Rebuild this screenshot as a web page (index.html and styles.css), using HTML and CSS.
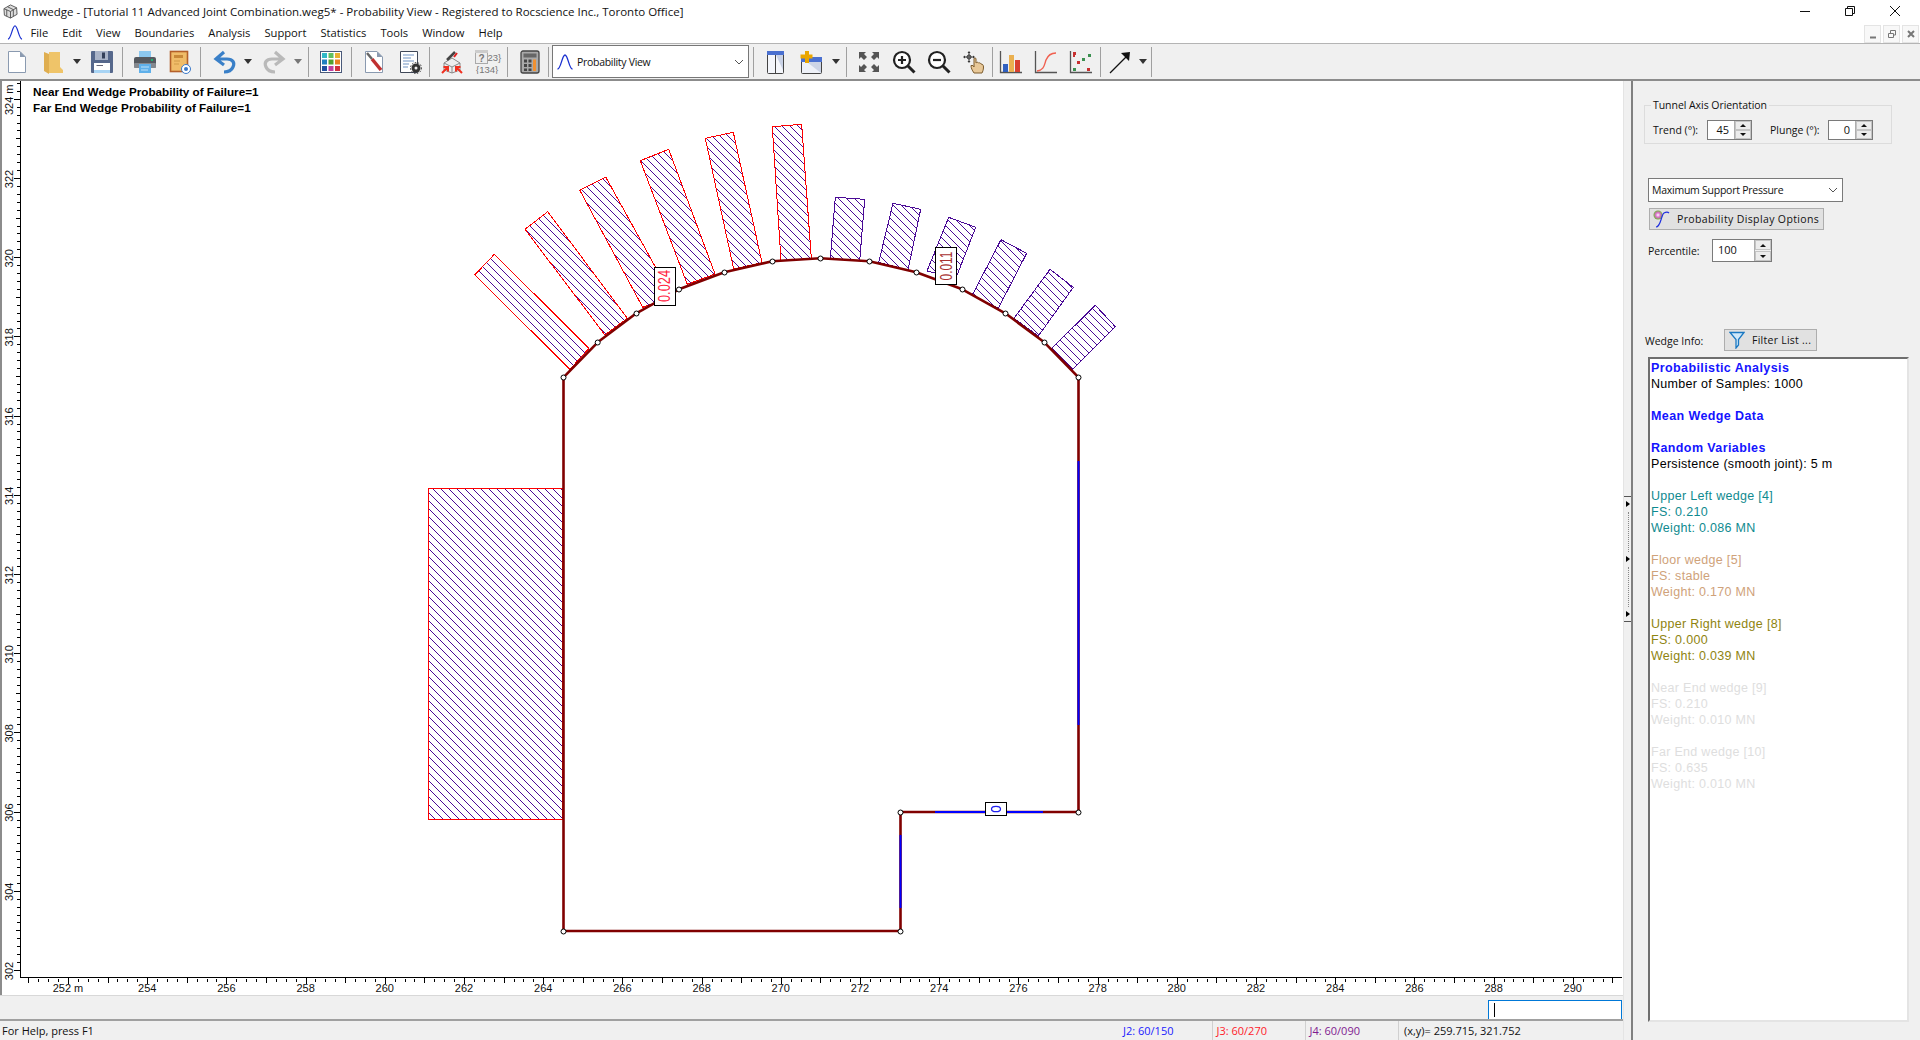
FILE: index.html
```html
<!DOCTYPE html>
<html lang="en">
<head>
<meta charset="utf-8">
<title>Unwedge</title>
<link rel="stylesheet" href="styles.css">
</head>
<body>
<div class="app">
  <header class="titlebar">
    <svg class="appicon" viewBox="0 0 16 16"><path d="M8 1 14.500 4 15 11 8 15 1.500 12 1 5Z" fill="#ddd" stroke="#555"/><path d="M1 5 8 8 14.500 4M8 8V15M5 3 11 6M4 6V13M11 6V13" fill="none" stroke="#555"/></svg>
    <span class="title-text">Unwedge - [Tutorial 11 Advanced Joint Combination.weg5* - Probability View - Registered to Rocscience Inc., Toronto Office]</span>
    <div class="winbtns">
      <svg class="wb" viewBox="0 0 10 10"><path d="M0 5.500H10" stroke="#111" fill="none"/></svg>
      <svg class="wb" viewBox="0 0 10 10"><path d="M.5 2.500H7.500V9.500H.5ZM2.500 2.500V.5H9.500V7.500H7.500" stroke="#111" fill="none"/></svg>
      <svg class="wb" viewBox="0 0 10 10"><path d="M0 0 10 10M10 0 0 10" stroke="#111" fill="none"/></svg>
    </div>
  </header>

  <nav class="menubar">
    <svg class="menuicon" viewBox="0 0 16 16"><path d="M.5 15C4 15 5 1 8 1S12 15 15.500 15" fill="none" stroke="#1a30d0" stroke-width="1.300"/></svg>
    <span>File</span><span>Edit</span><span>View</span><span>Boundaries</span><span>Analysis</span><span>Support</span><span>Statistics</span><span>Tools</span><span>Window</span><span>Help</span>
    <div class="mdibtns">
      <div class="mdi"><svg viewBox="0 0 10 10"><path d="M2 8.500H8" stroke="#777" stroke-width="2"/></svg></div>
      <div class="mdi"><svg viewBox="0 0 10 10"><path d="M1.500 4.500H6.500V8.500H1.500ZM3.500 4V1.500H8.500V6H7" stroke="#777" fill="none"/></svg></div>
      <div class="mdi"><svg viewBox="0 0 10 10"><path d="M2 2 8 8M8 2 2 8" stroke="#777" stroke-width="2"/></svg></div>
    </div>
  </nav>

  <div class="toolbar">
    <svg class="ic g5" viewBox="0 0 24 24"><path d="M3.500 1.500H15L20.500 7V22.500H3.500Z" fill="#fff" stroke="#8a9ab0"/><path d="M15 1.500V7H20.500Z" fill="#8a9ab0"/></svg>
    <svg class="ic g12" viewBox="0 0 24 24"><path d="M8 2H19V17L22 20V23H8Z" fill="#efc469"/><path d="M3 2 8 4V24L3 21Z" fill="#dfae50"/></svg>
    <svg class="dd g8" viewBox="0 0 8 5"><path d="M0 0H8L4 5Z" fill="#333"/></svg>
    <svg class="ic g9" viewBox="0 0 24 24"><rect x="1" y="1" width="22" height="22" rx="1" fill="#56688c"/><rect x="5" y="1" width="13" height="9" fill="#aab4c8"/><rect x="12" y="2.500" width="3" height="6" fill="#34405a"/><rect x="4" y="13" width="16" height="10" fill="#fff"/><rect x="4" y="20" width="16" height="3" fill="#a8d4f4"/><path d="M6.500 15.500H13" stroke="#667" fill="none"/></svg>
    <i class="sep g8"></i>
    <svg class="ic g10" viewBox="0 0 24 24"><rect x="6" y="1" width="12" height="7" fill="#8cc8f0"/><rect x="1" y="7" width="22" height="11" rx="2" fill="#55595f"/><rect x="1" y="13" width="22" height="5" rx="1" fill="#85898f"/><rect x="6" y="14" width="12" height="9" fill="#5fb0ea"/><path d="M8 17H16M8 20H15" stroke="#bfe0f8"/><rect x="18" y="9" width="2" height="2" fill="#20b070"/></svg>
    <svg class="ic g10" viewBox="0 0 24 24"><rect x="3.500" y="1.500" width="17" height="20" fill="#f0bc68" stroke="#b4602a" stroke-width="1.600"/><rect x="7" y="5" width="9" height="3" fill="#c88838"/><path d="M7 11H13M7 14H12" stroke="#d09a48"/><circle cx="19" cy="19" r="4.500" fill="#fff" stroke="#3a78c8"/><circle cx="19" cy="19" r="2" fill="#3a78c8"/></svg>
    <i class="sep g9"></i>
    <svg class="ic g12" viewBox="0 0 24 24"><path d="M11 2 3 9 11 15M4 9H14C20 9 22 13 20 17 18.500 20.500 15 22 11 22" fill="none" stroke="#3a80c8" stroke-width="3.200"/></svg>
    <svg class="dd g7" viewBox="0 0 8 5"><path d="M0 0H8L4 5Z" fill="#333"/></svg>
    <svg class="ic g10" viewBox="0 0 24 24"><path d="M13 2 21 9 13 15M20 9H10C4 9 2 13 4 17 5.500 20.500 9 22 13 22" fill="none" stroke="#b9b9b9" stroke-width="3.200"/></svg>
    <svg class="dd g8" viewBox="0 0 8 5"><path d="M0 0H8L4 5Z" fill="#777"/></svg>
    <i class="sep g6"></i>
    <svg class="ic g10" viewBox="0 0 24 24"><rect x="1.500" y="1.500" width="21" height="21" fill="#fff" stroke="#4a5a7a"/><path fill="#30b8c8" d="M3 3H8V8H3Z"/><path fill="#60c060" d="M9.500 3H14.500V8H9.500Z"/><path fill="#e8b030" d="M16 3H21V8H16Z"/><path fill="#2080c0" d="M3 9.500H8V14.500H3Z"/><path fill="#50a030" d="M9.500 9.500H14.500V14.500H9.500Z"/><path fill="#e88020" d="M16 9.500H21V14.500H16Z"/><path fill="#2050a0" d="M3 16H8V21H3Z"/><path fill="#c040a0" d="M9.500 16H14.500V21H9.500Z"/><path fill="#d03040" d="M16 16H21V21H16Z"/></svg>
    <i class="sep g8"></i>
    <svg class="ic g10" viewBox="0 0 24 24"><path d="M3.500 1.500H15L20.500 7V22.500H3.500Z" fill="#fff" stroke="#8a9ab0"/><path d="M15 1.500V7H20.500Z" fill="#8a9ab0"/><path d="M10 9 19 20" stroke="#c03030" stroke-width="3.500"/><path d="M5 3 10 9" stroke="#666" stroke-width="2.500"/></svg>
    <svg class="ic g12" viewBox="0 0 24 24"><path d="M2.500 1.500H19.500V22.500H2.500Z" fill="#fff" stroke="#404858"/><path d="M5 5H16M5 8H13M5 11H16M5 14H11M5 17H10" stroke="#a0b8d8" stroke-width="1.500"/><circle cx="18" cy="18" r="4.500" fill="#333"/><circle cx="18" cy="18" r="5.500" fill="none" stroke="#333" stroke-dasharray="1.500 1.500"/><circle cx="18" cy="18" r="1.500" fill="#eee"/></svg>
    <i class="sep g7"></i>
    <svg class="ic g10" viewBox="0 0 24 24"><path d="M12 8 20 13V20L12 23 4 20V13Z" fill="#eee" stroke="#888"/><path d="M4 13 12 17 20 13M12 17V23" fill="none" stroke="#888"/><path d="M7 10 15 2" stroke="#444" stroke-width="2.500"/><path d="M14 7 17 3" stroke="#e02020" stroke-width="2"/><path d="M2 23 8 17M3.500 17H8V21.500M22 23 16 17M20.500 17H16V21.500" fill="none" stroke="#f03020" stroke-width="2"/></svg>
    <svg class="ic-q g10" viewBox="0 0 28 24"><rect x="1.500" y="0.500" width="12" height="13" fill="#eee" stroke="#aaa"/><rect x="1" y="0" width="13" height="3" fill="#ccc"/><text class="t-q" x="7.500" y="12" text-anchor="middle">?</text><text class="t-q2" x="13.500" y="11">23}</text><text class="t-q2" x="2" y="22.500">{134}</text></svg>
    <i class="sep g5"></i>
    <svg class="ic g10" viewBox="0 0 24 24"><rect x="3" y="1" width="18" height="22" rx="2" fill="#a9a9a9" stroke="#444" stroke-width="1.300"/><rect x="5.500" y="3.500" width="13" height="4" fill="#666"/><path d="M6 9.500H9V12.500H6ZM10.500 9.500H13.500V12.500H10.500ZM6 14H9V17H6ZM10.500 14H13.500V17H10.500ZM6 18.500H9V21H6ZM10.500 18.500H13.500V21H10.500Z" fill="#444"/><path d="M15 9.500H18V21H15Z" fill="#f09030"/></svg>
    <i class="sep g6"></i>
    <div class="combo g3">
      <svg class="bell" viewBox="0 0 16 16"><path d="M.5 15C4 15 5 1 8 1S12 15 15.500 15" fill="none" stroke="#1a30d0" stroke-width="1.300"/></svg>
      <span class="combo-text">Probability View</span>
      <svg class="chev" viewBox="0 0 10 6"><path d="M1 1 5 5 9 1" fill="none" stroke="#555"/></svg>
    </div>
    <i class="sep g4"></i>
    <svg class="ic g10" viewBox="0 0 24 24"><rect x="3.500" y="1.500" width="16" height="22" rx="1" fill="#f4f6fb" stroke="#444"/><path d="M12 5 19 5V20Z" fill="#c9d2e6"/><rect x="3" y="1" width="17" height="4" fill="#4a70d0"/><path d="M11.500 5V23.500" stroke="#444"/></svg>
    <svg class="ic g11" viewBox="0 0 24 24"><rect x="2.500" y="7.500" width="20" height="16" rx="1" fill="#eef1f8" stroke="#444"/><path d="M8 12H22V23Z" fill="#ccd4e6"/><rect x="2" y="7" width="21" height="5" fill="#4a70d0"/><path d="M6 1H10V4.500H13.500V8.500H10V13H6V8.500H1.500V4.500H6Z" fill="#eaa600"/></svg>
    <svg class="dd g9" viewBox="0 0 8 5"><path d="M0 0H8L4 5Z" fill="#333"/></svg>
    <i class="sep g6"></i>
    <svg class="ic g10" viewBox="0 0 24 24"><path fill="#555" d="M2 2H9L7 4 10 7 7 10 4 7 2 9ZM22 2H15L17 4 14 7 17 10 20 7 22 9ZM2 22H9L7 20 10 17 7 14 4 17 2 15ZM22 22H15L17 20 14 17 17 14 20 17 22 15Z"/></svg>
    <svg class="ic g11" viewBox="0 0 24 24"><circle cx="10" cy="10" r="8" fill="#fff" stroke="#222" stroke-width="2.200"/><path d="M16 16 22.500 22.500" stroke="#222" stroke-width="3"/><path d="M6 10H14M10 6V14" stroke="#222" stroke-width="2.200"/></svg>
    <svg class="ic g11" viewBox="0 0 24 24"><circle cx="10" cy="10" r="8" fill="#fff" stroke="#222" stroke-width="2.200"/><path d="M16 16 22.500 22.500" stroke="#222" stroke-width="3"/><path d="M6 10H14" stroke="#222" stroke-width="2.200"/></svg>
    <svg class="ic g11" viewBox="0 0 24 24"><path d="M2 7H12M7 2V12" stroke="#333"/><path d="M5.500 3 7 1 8.500 3ZM5.500 11 7 13 8.500 11ZM3 5.500 1 7 3 8.500ZM11 5.500 13 7 11 8.500Z" fill="#333"/><circle cx="7" cy="7" r="2" fill="none" stroke="#333"/><path d="M12 23C10 20 9 18 9 15.500L11 15.500 12 17V9C12 7.500 14 7.500 14 9V13C15 12 16 12 16.500 13 17.500 12.500 18.500 13 19 14 20.500 14 21.500 15 21.500 17 21.500 20 20.500 22 20 23Z" fill="#e8c898" stroke="#7d5c2e"/></svg>
    <i class="sep g6"></i>
    <svg class="ic g6" viewBox="0 0 24 24"><path d="M1.500 1V22.500H23" fill="none" stroke="#555" stroke-width="1.300"/><rect x="4" y="14" width="5" height="8" fill="#3060c0"/><rect x="10" y="5" width="5" height="17" fill="#eab050"/><rect x="16" y="10" width="5" height="12" fill="#d84030"/></svg>
    <svg class="ic g11" viewBox="0 0 24 24"><path d="M1.500 1V22.500H23" fill="none" stroke="#555" stroke-width="1.300"/><path d="M3 21C10 20 10 16 12 10 14 5 18 3 22 3" fill="none" stroke="#f06050" stroke-width="1.400"/></svg>
    <svg class="ic g11" viewBox="0 0 24 24"><path d="M1.500 1V22.500H23" fill="none" stroke="#555" stroke-width="1.300"/><path fill="#c83030" d="M4 2H7V5H4ZM8 11H11V14H8ZM18 18H21V21H18ZM4 5H6V7H4Z"/><path fill="#3a9050" d="M19 4H22V7H19ZM13 8H16V11H13ZM4 18H7V21H4Z"/></svg>
    <i class="sep g7"></i>
    <svg class="ic g7" viewBox="0 0 24 24"><path d="M2 23 20 5" stroke="#111" stroke-width="1.300"/><path d="M13 3 22 2 21 11Z" fill="#111"/></svg>
    <svg class="dd g7" viewBox="0 0 8 5"><path d="M0 0H8L4 5Z" fill="#333"/></svg>
    <i class="sep g4"></i>
  </div>

  <main class="main">
    <section class="workspace">
      <div class="canvas">
        <svg class="plot" viewBox="0 81 1623 914" width="1623" height="914">
          <defs>
            <pattern id="hatch" patternUnits="userSpaceOnUse" width="8" height="8">
              <path class="hatch-line" d="M-1 -1 9 9"/>
            </pattern>
          </defs>

          <g class="note">
            <text x="33" y="96">Near End Wedge Probability of Failure=1</text>
            <text x="33" y="112">Far End Wedge Probability of Failure=1</text>
          </g>

          <g class="wedge red">
            <polygon points="474.700,275 494.300,254.300 589,348.300 570,369.300"/>
            <polygon points="525,229.300 547.700,211.700 627.300,318.300 605,335"/>
            <polygon points="579.700,190 605.700,177 672,297 642.700,307.300"/>
            <polygon points="640.300,160.700 668.700,149.300 715,274 687.300,284.300"/>
            <polygon points="705.300,138.300 733.300,132.300 762,262.700 733.700,269"/>
            <polygon points="772.300,126.700 801.700,124.300 811.300,258.300 781,260.700"/>
            <rect class="wedge-box" x="428.500" y="488.500" width="134" height="331"/>
          </g>
          <g class="wedge purple">
            <polygon points="835.300,197.300 864.700,199.300 859.700,260.700 830.300,258.700"/>
            <polygon points="893,203.300 920.700,209.300 908,270 878.700,262.300"/>
            <polygon points="948.700,217.300 975.700,227.300 956,278 927,271"/>
            <polygon points="1001,239.700 1026.700,253.300 998.300,308.300 972.300,295"/>
            <polygon points="1050,269.300 1073.300,287.300 1038.300,336 1014,318.300"/>
            <polygon points="1095.300,305.300 1115.300,326.700 1072.700,369.300 1051.700,348.300"/>
          </g>

          <polyline class="tunnel" points="563.500,377.300 597.700,342.300 636.300,313.300 679,289.300 724.300,272.300 772.300,261.300 820.300,258.300 869.300,261.300 916.300,272.300 962.300,289.300 1005.300,313.300 1044.300,342.300 1078.500,377.300 1078.500,812 900.500,812 900.500,931 563.500,931 563.500,377.300"/>
          <path class="tunnel-blue" d="M1078.500 461V725M1043 812H935M900.500 835V908"/>

          <g class="vertex">
            <circle cx="563.500" cy="377.500" r="2.500"/><circle cx="597.700" cy="342.500" r="2.500"/><circle cx="636.500" cy="313.500" r="2.500"/><circle cx="679" cy="289.500" r="2.500"/><circle cx="724.500" cy="272.500" r="2.500"/><circle cx="772.500" cy="261.500" r="2.500"/><circle cx="820.500" cy="258.500" r="2.500"/><circle cx="869.500" cy="261.500" r="2.500"/><circle cx="916.500" cy="272.500" r="2.500"/><circle cx="962.500" cy="289.500" r="2.500"/><circle cx="1005.500" cy="313.500" r="2.500"/><circle cx="1044.500" cy="342.500" r="2.500"/><circle cx="1078.500" cy="377.500" r="2.500"/><circle cx="1078.500" cy="812.500" r="2.500"/><circle cx="900.500" cy="812.500" r="2.500"/><circle cx="900.500" cy="931.500" r="2.500"/><circle cx="563.500" cy="931.500" r="2.500"/>
          </g>

          <g class="flag">
            <rect x="654.500" y="267.500" width="21" height="38"/>
            <text class="flag-red" transform="rotate(-90 670 286)" x="670" y="286" textLength="32" lengthAdjust="spacingAndGlyphs">0.024</text>
            <rect x="935.500" y="247.500" width="21" height="37"/>
            <text class="flag-dark" transform="rotate(-90 951.500 266)" x="951.500" y="266" textLength="29" lengthAdjust="spacingAndGlyphs">0.011</text>
            <rect x="985.500" y="802.500" width="21" height="13"/>
            <ellipse class="flag-ring" cx="996" cy="809" rx="4.500" ry="2.700"/>
          </g>

          <path class="axis" d="M20.500 81V977.500H1622"/>
          <g class="ticks">
            <line class="t1" x1="28.400" y1="980" x2="1620" y2="980"/>
            <line class="t2" x1="28.400" y1="980.500" x2="1620" y2="980.500"/>
            <line class="t3" x1="68" y1="981" x2="1620" y2="981"/>
            <line class="t1y" x1="18.500" y1="971" x2="18.500" y2="82"/>
            <line class="t3" x1="17" y1="971" x2="17" y2="82"/>
            <line class="t2" x1="18" y1="931.400" x2="18" y2="82"/>
          </g>
          <g class="xlabels">
            <text x="68" y="992">252 m</text><text x="147.200" y="992">254</text><text x="226.400" y="992">256</text><text x="305.600" y="992">258</text><text x="384.800" y="992">260</text><text x="464" y="992">262</text><text x="543.200" y="992">264</text><text x="622.400" y="992">266</text><text x="701.600" y="992">268</text><text x="780.800" y="992">270</text><text x="860" y="992">272</text><text x="939.200" y="992">274</text><text x="1018.400" y="992">276</text><text x="1097.600" y="992">278</text><text x="1176.800" y="992">280</text><text x="1256" y="992">282</text><text x="1335.200" y="992">284</text><text x="1414.400" y="992">286</text><text x="1493.600" y="992">288</text><text x="1572.800" y="992">290</text>
          </g>
          <g class="xlabels">
            <text transform="rotate(-90 13 971)" x="13" y="971">302</text>
            <text transform="rotate(-90 13 891.800)" x="13" y="891.800">304</text>
            <text transform="rotate(-90 13 812.600)" x="13" y="812.600">306</text>
            <text transform="rotate(-90 13 733.400)" x="13" y="733.400">308</text>
            <text transform="rotate(-90 13 654.200)" x="13" y="654.200">310</text>
            <text transform="rotate(-90 13 575)" x="13" y="575">312</text>
            <text transform="rotate(-90 13 495.800)" x="13" y="495.800">314</text>
            <text transform="rotate(-90 13 416.600)" x="13" y="416.600">316</text>
            <text transform="rotate(-90 13 337.400)" x="13" y="337.400">318</text>
            <text transform="rotate(-90 13 258.200)" x="13" y="258.200">320</text>
            <text transform="rotate(-90 13 179)" x="13" y="179">322</text>
            <text transform="rotate(-90 13 99.800)" x="13" y="99.800">324 m</text>
          </g>
        </svg>
      </div>
      <div class="cmdrow"><div class="cmdinput"><i class="caret"></i></div></div>
      <footer class="statusbar">
        <span class="st-help">For Help, press F1</span>
        <span class="st-cell st-j2">J2: 60/150</span>
        <span class="st-cell st-j3">J3: 60/270</span>
        <span class="st-cell st-j4">J4: 60/090</span>
        <span class="st-cell st-xy">(x,y)= 259.715, 321.752</span>
      </footer>
    </section>

    <div class="splitter">
      <div class="grip"><i></i><b></b><i></i><b></b><i></i></div>
    </div>

    <aside class="side">
      <div class="group">
        <span class="legend">Tunnel Axis Orientation</span>
        <label class="lbl-trend">Trend (°):</label>
        <div class="num">
          <span class="val">45</span>
          <div class="spin"><span class="up"></span><span class="down"></span></div>
        </div>
        <label class="lbl-plunge">Plunge (°):</label>
        <div class="num">
          <span class="val">0</span>
          <div class="spin"><span class="up"></span><span class="down"></span></div>
        </div>
      </div>

      <div class="select">
        <span>Maximum Support Pressure</span>
        <svg class="chev" viewBox="0 0 10 6"><path d="M1 1 5 5 9 1" fill="none" stroke="#555"/></svg>
      </div>

      <div class="btn btn-prob">
        <svg class="btn-ic" viewBox="0 0 18 18"><defs><radialGradient id="ball"><stop offset="0" stop-color="#fff"/><stop offset=".5" stop-color="#e070d0"/><stop offset="1" stop-color="#70b040"/></radialGradient></defs><circle cx="5" cy="5" r="4.500" fill="url(#ball)"/><path d="M3 17C8 17 8 5 11 3 13 2 15 2 16 3" fill="none" stroke="#2030e0" stroke-width="1.200"/></svg>
        <span>Probability Display Options</span>
      </div>

      <div class="pct">
        <label class="lbl-pct">Percentile:</label>
        <div class="num num-wide">
          <span class="val val-left">100</span>
          <div class="spin spin-split"><span class="up"></span><span class="down"></span></div>
        </div>
      </div>

      <div class="wedgehead">
        <label class="lbl-wedge">Wedge Info:</label>
        <div class="btn btn-filter">
          <svg class="btn-ic" viewBox="0 0 16 18"><path d="M1 1.500H15L9.500 8.500V14L7 17V8.500Z" fill="#cfe8fa" stroke="#1a78c2" stroke-width="1.300"/></svg>
          <span>Filter List ...</span>
        </div>
      </div>

      <div class="info">
        <p class="h">Probabilistic Analysis</p>
        <p>Number of Samples: 1000</p>
        <p>&nbsp;</p>
        <p class="h">Mean Wedge Data</p>
        <p>&nbsp;</p>
        <p class="h">Random Variables</p>
        <p>Persistence (smooth joint): 5 m</p>
        <p>&nbsp;</p>
        <p class="teal">Upper Left wedge [4]</p>
        <p class="teal">FS: 0.210</p>
        <p class="teal">Weight: 0.086 MN</p>
        <p>&nbsp;</p>
        <p class="tan">Floor wedge [5]</p>
        <p class="tan">FS: stable</p>
        <p class="tan">Weight: 0.170 MN</p>
        <p>&nbsp;</p>
        <p class="olive">Upper Right wedge [8]</p>
        <p class="olive">FS: 0.000</p>
        <p class="olive">Weight: 0.039 MN</p>
        <p>&nbsp;</p>
        <p class="faint">Near End wedge [9]</p>
        <p class="faint">FS: 0.210</p>
        <p class="faint">Weight: 0.010 MN</p>
        <p>&nbsp;</p>
        <p class="faint">Far End wedge [10]</p>
        <p class="faint">FS: 0.635</p>
        <p class="faint">Weight: 0.010 MN</p>
      </div>
    </aside>
  </main>
</div>
</body>
</html>
```

FILE: styles.css
```css
* { box-sizing: border-box; }
html, body { margin: 0; padding: 0; }
body { width: 1920px; height: 1040px; overflow: hidden; background: #f0f0f0; font-family: "Open Sans", "Liberation Sans", sans-serif; color: #111; }
.app { width: 1920px; height: 1040px; display: flex; flex-direction: column; overflow: hidden; }

.titlebar { height: 22px; background: #fff; display: flex; align-items: center; padding-left: 3px; font-size: 11.500px; flex: none; }
.appicon { width: 15px; height: 15px; margin-right: 5px; flex: none; }
.title-text { white-space: nowrap; }
.winbtns { margin-left: auto; display: flex; gap: 35px; padding-right: 20px; }
.wb { width: 10px; height: 10px; display: block; }

.menubar { height: 21px; background: #fff; display: flex; align-items: center; gap: 14px; padding-left: 7px; font-size: 11.200px; flex: none; }
.menuicon { width: 16px; height: 15px; margin-right: -6.500px; flex: none; }
.mdibtns { margin-left: auto; display: flex; gap: 2px; padding-right: 1px; align-self: flex-end; }
.mdi { width: 17px; height: 18px; background: #f8f8f8; border: 1px solid #e4e4e4; display: flex; align-items: center; justify-content: center; }
.mdi svg { width: 10px; height: 10px; display: block; }

.toolbar { height: 38px; background: #f0f0f0; border-top: 1px solid #b4b4b4; border-bottom: 2px solid #8c8c8c; display: flex; align-items: center; flex: none; }
.ic { width: 24px; height: 24px; flex: none; display: block; }
.ic-q { width: 28px; height: 24px; flex: none; display: block; }
.dd { width: 8px; height: 5px; flex: none; display: block; }
.sep { width: 1px; height: 30px; background: #a0a0a0; flex: none; display: block; }
.g3 { margin-left: 3px; } .g4 { margin-left: 4px; } .g5 { margin-left: 5px; } .g6 { margin-left: 6px; }
.g7 { margin-left: 7px; } .g8 { margin-left: 8px; } .g9 { margin-left: 9px; } .g10 { margin-left: 10px; }
.g11 { margin-left: 11px; } .g12 { margin-left: 12px; }
.t-q { font: bold 10px "Liberation Sans", sans-serif; fill: #777; }
.t-q2 { font: 9.500px "Liberation Sans", sans-serif; fill: #777; }

.combo { width: 197px; height: 33px; background: #fff; border: 1px solid #777; display: flex; align-items: center; font-size: 10.500px; letter-spacing: -.3px; flex: none; }
.bell { width: 16px; height: 16px; margin-left: 4px; }
.combo-text { margin-left: 4px; }
.chev { width: 10px; height: 6px; margin-left: auto; margin-right: 4px; }

.main { flex: 1; display: flex; min-height: 0; }
.workspace { width: 1623px; display: flex; flex-direction: column; flex: none; }
.canvas { height: 914px; background: #fff; border-left: 2px solid #8c8c8c; flex: none; overflow: hidden; position: relative; }
.plot { display: block; margin-left: -2px; }
.note text { font: bold 11.700px "Liberation Sans", sans-serif; fill: #000; }
.hatch-line { stroke: #4a0a96; stroke-width: 1; fill: none; shape-rendering: crispEdges; }
.wedge polygon, .wedge rect { fill: url(#hatch); shape-rendering: crispEdges; }
.wedge.red polygon { stroke: #ff0000; stroke-width: 1; }
.wedge.red rect { stroke: #ff0000; stroke-width: 1.500; }
.wedge.purple polygon { stroke: #4a0a96; stroke-width: 1; }
.tunnel { fill: none; stroke: #800000; stroke-width: 2.600; stroke-linejoin: round; }
.tunnel-blue { fill: none; stroke: #0000ff; stroke-width: 2; }
.vertex circle { fill: #fff; stroke: #000; stroke-width: 1; }
.flag rect { fill: #fff; stroke: #000; stroke-width: 1; }
.flag text { font: 16px "Liberation Sans", sans-serif; text-anchor: middle; }
.flag-red { fill: #ff2040; }
.flag-dark { fill: #a83030; }
.flag-ring { fill: none; stroke: #2020f0; stroke-width: 1.300; }
.axis { fill: none; stroke: #000; stroke-width: 1; shape-rendering: crispEdges; }
.ticks line { stroke: #000; shape-rendering: crispEdges; }
.t1 { stroke-width: 3; stroke-dasharray: 1 8.900; }
.t1y { stroke-width: 3; stroke-dasharray: 1 6.920; }
.t2 { stroke-width: 5; stroke-dasharray: 1 38.600; }
.t3 { stroke-width: 6; stroke-dasharray: 1 78.200; }
.xlabels text { font: 11px "Liberation Sans", sans-serif; text-anchor: middle; fill: #111; }

.cmdrow { height: 24px; display: flex; justify-content: flex-end; align-items: flex-start; padding: 4px 1px 0 0; flex: none; border-top: 1px solid #d8d8d8; }
.cmdinput { width: 134px; height: 20px; background: #fff; border: 1px solid #0078d7; display: flex; align-items: center; padding-left: 5px; }
.caret { width: 1px; height: 14px; background: #000; display: block; }

.statusbar { flex: 1; border-top: 2px solid #a0a0a0; display: flex; align-items: center; font-size: 11px; position: relative; }
.st-help { margin-left: 2px; width: 1121px; }
.st-cell { height: 100%; display: flex; align-items: center; white-space: nowrap; }
.st-j2 { width: 89px; color: #1a1aff; }
.st-j3 { width: 93px; color: #ff1a2a; padding-left: 3.500px; border-left: 1px solid #d0d0d0; }
.st-j4 { width: 93px; color: #801a90; padding-left: 3.500px; border-left: 1px solid #d0d0d0; }
.st-xy { padding-left: 5px; border-left: 1px solid #d0d0d0; }

.splitter { width: 10px; flex: none; border-left: 1px solid #e4e4e4; border-right: 2px solid #808080; padding-top: 415px; }
.grip { width: 7px; height: 126px; border-top: 1px solid #555; border-bottom: 1px solid #555; display: flex; flex-direction: column; align-items: flex-start; justify-content: space-between; padding: 4px 0 4px 2px; }
.grip i { width: 0; height: 0; border-left: 4px solid #000; border-top: 3px solid transparent; border-bottom: 3px solid transparent; display: block; }
.grip b { height: 40px; width: 1px; margin-left: 2px; border-left: 1px dotted #888; display: block; }

.side { flex: 1; min-width: 0; background: #f0f0f0; font-size: 10.500px; padding: 24px 0 0 11px; }
.group { position: relative; width: 248px; height: 39px; border: 1px solid #dcdcdc; display: flex; align-items: flex-start; padding: 14px 0 0 8px; }
.legend { position: absolute; left: 6px; top: -8px; background: #f0f0f0; padding: 0 2px; white-space: nowrap; letter-spacing: -.05px; }
.lbl-trend { width: 54px; line-height: 20px; }
.lbl-plunge { width: 58px; margin-left: 18px; line-height: 20px; }
.num { width: 45px; height: 20px; display: flex; border: 1px solid #7a7a7a; background: #fff; }
.val { flex: 1; text-align: right; padding-right: 5px; line-height: 18px; background: #fff; font-size: 11px; }
.val-left { text-align: left; padding: 0 0 0 5px; line-height: 19px; }
.spin { width: 17px; background: #e6e6e6; border-left: 1px solid #adadad; display: flex; flex-direction: column; }
.spin span { flex: 1; display: flex; align-items: center; justify-content: center; background: #ececec; border: 1px solid #c4c4c4; }
.up::before { content: ""; border-left: 3px solid transparent; border-right: 3px solid transparent; border-bottom: 3px solid #111; }
.down::before { content: ""; border-left: 3px solid transparent; border-right: 3px solid transparent; border-top: 3px solid #111; }

.select { width: 195px; height: 24px; margin: 34px 0 0 4px; background: #fff; border: 1px solid #7a7a7a; display: flex; align-items: center; padding-left: 3px; letter-spacing: -.25px; }
.btn { background: #e1e1e1; border: 1px solid #adadad; display: flex; align-items: center; white-space: nowrap; }
.btn-prob { width: 175px; height: 22px; margin: 6px 0 0 5px; padding-left: 3px; letter-spacing: .37px; }
.btn-ic { width: 18px; height: 18px; flex: none; margin-right: 6px; }
.pct { display: flex; align-items: center; margin: 9px 0 0 4px; }
.lbl-pct { width: 64px; }
.num-wide { width: 60px; height: 23px; }
.spin-split { gap: 1px; background: #f0f0f0; }
.wedgehead { display: flex; align-items: center; margin: 67px 0 0 1px; }
.lbl-wedge { width: 79px; padding-top: 2px; }
.btn-filter { width: 93px; height: 22px; padding-left: 4px; letter-spacing: .26px; }
.btn-filter .btn-ic { width: 16px; margin-right: 7px; }
.info { width: 261px; height: 665px; margin: 6px 0 0 4px; background: #fff; border: 2px solid #e4e4e4; border-top-color: #6e6e6e; border-left-color: #6e6e6e; padding: 1px 0 0 1px; font: 12.500px/16px "Liberation Sans", sans-serif; color: #000; letter-spacing: .3px; }
.info p { margin: 0; white-space: nowrap; }
.info .h { color: #1414ff; font-weight: bold; letter-spacing: .4px; }
.info .teal { color: #0f8a8f; }
.info .tan { color: #cfa27a; }
.info .olive { color: #8f8410; }
.info .faint { color: #dedede; }
```
